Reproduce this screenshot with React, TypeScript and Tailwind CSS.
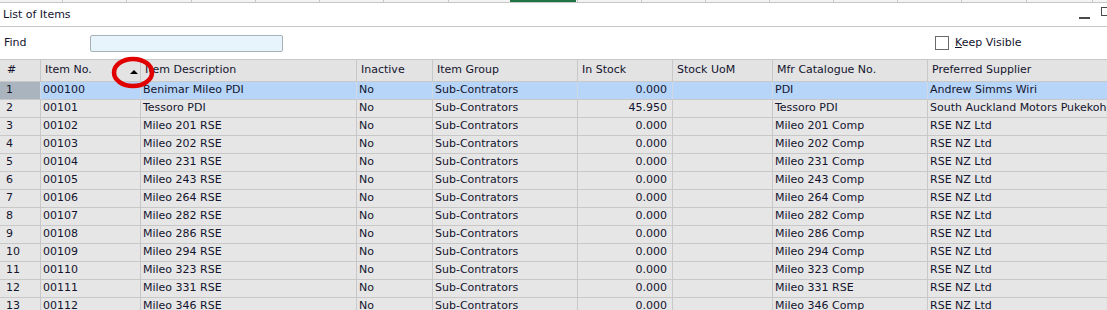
import React from "react";

const cols = [
  { w: 41, label: "#" },
  { w: 100, label: "Item No." },
  { w: 216, label: "Item Description" },
  { w: 76, label: "Inactive" },
  { w: 145, label: "Item Group" },
  { w: 95, label: "In Stock" },
  { w: 100, label: "Stock UoM" },
  { w: 155, label: "Mfr Catalogue No." },
  { w: 200, label: "Preferred Supplier" },
];

type Row = [string, string, string, string, string, string, string, string, string];

const rows: Row[] = [
  ["1", "000100", "Benimar Mileo PDI", "No", "Sub-Contrators", "0.000", "", "PDI", "Andrew Simms Wiri"],
  ["2", "00101", "Tessoro PDI", "No", "Sub-Contrators", "45.950", "", "Tessoro PDI", "South Auckland Motors Pukekohe"],
  ["3", "00102", "Mileo 201 RSE", "No", "Sub-Contrators", "0.000", "", "Mileo 201 Comp", "RSE NZ Ltd"],
  ["4", "00103", "Mileo 202 RSE", "No", "Sub-Contrators", "0.000", "", "Mileo 202 Comp", "RSE NZ Ltd"],
  ["5", "00104", "Mileo 231 RSE", "No", "Sub-Contrators", "0.000", "", "Mileo 231 Comp", "RSE NZ Ltd"],
  ["6", "00105", "Mileo 243 RSE", "No", "Sub-Contrators", "0.000", "", "Mileo 243 Comp", "RSE NZ Ltd"],
  ["7", "00106", "Mileo 264 RSE", "No", "Sub-Contrators", "0.000", "", "Mileo 264 Comp", "RSE NZ Ltd"],
  ["8", "00107", "Mileo 282 RSE", "No", "Sub-Contrators", "0.000", "", "Mileo 282 Comp", "RSE NZ Ltd"],
  ["9", "00108", "Mileo 286 RSE", "No", "Sub-Contrators", "0.000", "", "Mileo 286 Comp", "RSE NZ Ltd"],
  ["10", "00109", "Mileo 294 RSE", "No", "Sub-Contrators", "0.000", "", "Mileo 294 Comp", "RSE NZ Ltd"],
  ["11", "00110", "Mileo 323 RSE", "No", "Sub-Contrators", "0.000", "", "Mileo 323 Comp", "RSE NZ Ltd"],
  ["12", "00111", "Mileo 331 RSE", "No", "Sub-Contrators", "0.000", "", "Mileo 331 RSE", "RSE NZ Ltd"],
  ["13", "00112", "Mileo 346 RSE", "No", "Sub-Contrators", "0.000", "", "Mileo 346 Comp", "RSE NZ Ltd"],
];

const stripLines = [62, 126, 191, 255, 319, 383, 448, 512, 577, 641, 705, 769, 833, 897, 961, 1026, 1092];

export default function App() {
  return (
    <div
      className="relative w-[1107px] h-[310px] overflow-hidden bg-white text-[11px] text-[#14142e]"
      style={{ fontFamily: '"DejaVu Sans", Tahoma, sans-serif' }}
    >
      {/* top strip */}
      <div className="relative h-[3px] bg-[#f3f3f3] border-b border-[#c6c6c6]">
        {stripLines.map((x) => (
          <div key={x} className="absolute top-0 h-[2px] w-px bg-[#c6c6c6]" style={{ left: x }} />
        ))}
        <div className="absolute top-0 left-[510px] w-[66px] h-[2px] bg-[#217346]" />
      </div>

      {/* title bar */}
      <div className="flex items-center h-[24px] border-b border-[#c8c8c8] pl-[3px] relative">
        <span className="leading-none">List of Items</span>
        <div className="absolute left-[1079px] top-[14px] w-[11px] h-[2px] bg-[#4a4a4a]" />
        <div className="absolute left-[1101px] top-[4px] w-[10px] h-[9px] border-[1.5px] border-[#4a4a4a]" />
      </div>

      {/* find row */}
      <div className="flex items-center h-[32px] pl-[4px]">
        <span className="w-[86px]">Find</span>
        <div className="w-[193px] h-[17px] bg-[#e8f4fc] border border-[#a8b0b8] rounded-[2px]" />
        <div className="ml-[652px] flex items-center">
          <div className="w-[14px] h-[14px] border border-[#6a6a6a] bg-white" />
          <span className="ml-[6px]">
            <span className="underline">K</span>eep Visible
          </span>
        </div>
      </div>

      {/* header */}
      <div className="flex h-[23px] border-t border-b border-[#c8c8c8] bg-[#e3e3e3]">
        {cols.map((c, i) => (
          <div
            key={i}
            className={`shrink-0 flex items-center border-r border-[#c8c8c8] relative ${i === 0 ? "pl-[7px]" : "pl-[4px]"}`}
            style={{ width: c.w }}
          >
            <span className="whitespace-nowrap">{c.label}</span>
            {i === 1 && (
              <svg className="absolute left-[89px] top-[10px]" width="8" height="4" viewBox="0 0 8 4">
                <polygon points="0,4 8,4 4,0" fill="#000" />
              </svg>
            )}
          </div>
        ))}
      </div>

      {/* rows */}
      {rows.map((r, ri) => {
        const sel = ri === 0;
        return (
          <div
            key={ri}
            className={`flex h-[18px] border-b border-[#c8c8c8] ${sel ? "bg-[#b6d5f8]" : "bg-[#e6e6e6]"}`}
          >
            {r.map((v, ci) => (
              <div
                key={ci}
                className={`shrink-0 flex items-center border-r ${sel ? "border-[#d0d8e4]" : "border-[#c8c8c8]"} overflow-hidden whitespace-nowrap ${
                  ci === 5 ? "justify-end pr-[5px]" : ci === 0 ? "pl-[6px]" : "pl-[2px]"
                } ${sel && ci === 0 ? "bg-[#aab4bf]" : ""}`}
                style={{ width: cols[ci].w }}
              >
                {v}
              </div>
            ))}
          </div>
        );
      })}

      {/* red annotation circle */}
      <svg className="absolute left-[110px] top-[55px]" width="46" height="35" viewBox="0 0 46 35">
        <ellipse cx="23" cy="17.5" rx="19" ry="13.5" fill="none" stroke="#e00000" strokeWidth="4.5" />
      </svg>
    </div>
  );
}
